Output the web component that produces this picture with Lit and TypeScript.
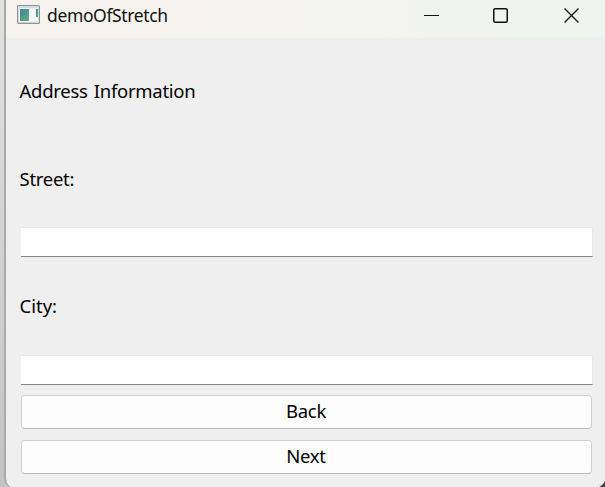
import { LitElement, html, css } from "lit";
import { customElement, property } from "lit/decorators.js";

@customElement("title-bar")
class TitleBar extends LitElement {
  static styles = css`
    :host {
      display: flex;
      height: 38px;
      flex: none;
      box-sizing: border-box;
      padding: 0 26px 8px 11px;
      align-items: center;
      background: linear-gradient(90deg, #f6f2ee 0%, #f5f3ee 40%, #f1f4ec 70%, #eef4ef 100%);
    }
    .caption {
      flex: 1;
      margin-left: 7px;
      font-size: 17.5px;
      line-height: 24px;
      letter-spacing: -0.37px;
      color: #111;
      white-space: nowrap;
    }
    svg { display: block; flex: none; }
    .icon { margin-top: -1px; }
    .controls { display: flex; align-items: center; margin-top: 2px; }
    .maximize { margin: 0 55px 0 54px; }
  `;
  @property() caption = "";

  render() {
    return html`
      <svg class="icon" width="23" height="19" viewBox="0 0 23 19">
        <defs>
          <linearGradient id="g" x1="0" y1="0" x2="1" y2="1">
            <stop offset="0" stop-color="#4380a0" />
            <stop offset="1" stop-color="#62b36f" />
          </linearGradient>
        </defs>
        <rect x="0.6" y="0.6" width="21.8" height="17.8" rx="1" fill="#eceef2" stroke="#8d9199" stroke-width="1.2" />
        <rect x="1.2" y="1.2" width="20.6" height="2" fill="#d5dbe8" />
        <rect x="2.5" y="3.5" width="10" height="13" fill="#fff" />
        <rect x="3" y="4" width="9" height="12" fill="url(#g)" />
        <rect x="13.5" y="4" width="4" height="8" fill="#fafafa" />
        <rect x="19" y="4" width="2" height="8" fill="url(#g)" />
        <rect x="13.5" y="13" width="7.5" height="3" fill="#fafafa" />
      </svg>
      <span class="caption">${this.caption}</span>
      <div class="controls">
        <svg width="15" height="16" viewBox="0 0 15 16"><path d="M0 7.5H15" stroke="#111" /></svg>
        <svg class="maximize" width="15" height="16" viewBox="0 0 15 16">
          <rect x="0.75" y="0.75" width="13.5" height="13.5" rx="1.5" fill="none" stroke="#111" stroke-width="1.5" />
        </svg>
        <svg width="17" height="16" viewBox="0 0 17 16">
          <path d="M1.5 0.5L15.5 14.5M15.5 0.5L1.5 14.5" stroke="#16161c" stroke-width="1.4" />
        </svg>
      </div>
    `;
  }
}

@customElement("app-root")
class AppRoot extends LitElement {
  static styles = css`
    :host {
      display: block;
      width: 605px;
      height: 487px;
      overflow: hidden;
      box-sizing: border-box;
      padding-left: 4px;
      background:
        linear-gradient(#444, #444) right bottom / 20px 20px no-repeat,
        linear-gradient(180deg, #e2e2e2, #d2d2d2 50%, #c4c4c4);
      font-family: "Noto Sans", "Open Sans", sans-serif;
      color: #000;
    }
    .window {
      display: flex;
      flex-direction: column;
      width: 602px;
      height: 500px;
      margin-top: -12px;
      box-sizing: border-box;
      padding-top: 12px;
      border-left: 2px solid #a9a9a9;
      border-radius: 12px 0 12px 10px;
      overflow: hidden;
      background: linear-gradient(#f6f2ee 0 20px, #efefef 20px);
    }
    .form {
      display: flex;
      flex-direction: column;
      padding: 41px 14px 0 15px;
    }
    .label {
      font-size: 18.5px;
      line-height: 24px;
      height: 24px;
      margin-left: -1.5px;
      letter-spacing: -0.27px;
      word-spacing: 1.6px;
      white-space: nowrap;
    }
    .street { margin-top: 64px; }
    .city { margin-top: 37px; letter-spacing: 0; }
    .field {
      width: 572px;
      height: 30px;
      margin-top: 36px;
      box-sizing: border-box;
      border: 1px solid #e9e9e9;
      border-left: 0;
      border-bottom-color: #868686;
      background: #fff;
    }
    .city + .field { margin-top: 37px; }
    .button {
      width: 571px;
      height: 34px;
      margin-top: 10px;
      box-sizing: border-box;
      border: 1px solid #d0d0d0;
      border-bottom-color: #b9b9b9;
      border-radius: 4px;
      padding-right: 1px;
      background: #fdfdfd;
      text-align: center;
      font-size: 18.5px;
      line-height: 30px;
      letter-spacing: -0.27px;
    }
    .button + .button { margin-top: 11px; }
  `;

  render() {
    return html`
      <div class="window">
        <title-bar caption="demoOfStretch"></title-bar>
        <div class="form">
          <div class="label">Address Information</div>
          <div class="label street">Street:</div>
          <div class="field"></div>
          <div class="label city">City:</div>
          <div class="field"></div>
          <div class="button">Back</div>
          <div class="button">Next</div>
        </div>
      </div>
    `;
  }
}
